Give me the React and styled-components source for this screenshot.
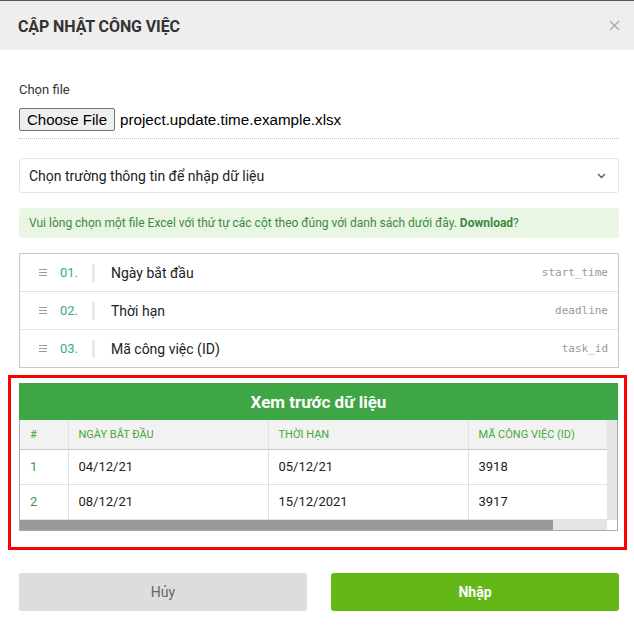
import React from "react";
import styled, { createGlobalStyle } from "styled-components";

const GlobalStyle = createGlobalStyle`
  html, body {
    margin: 0;
    padding: 0;
    background: #fff;
    font-family: Roboto, "Noto Sans", sans-serif;
    color: #333;
  }
  * { box-sizing: border-box; }
`;

const fields = [
  { no: "01.", label: "Ngày bắt đầu", key: "start_time" },
  { no: "02.", label: "Thời hạn", key: "deadline" },
  { no: "03.", label: "Mã công việc (ID)", key: "task_id" },
];

const columns = [
  { title: "#", w: 48 },
  { title: "Ngày bắt đầu", w: 200 },
  { title: "Thời hạn", w: 200 },
  { title: "Mã công việc (ID)", w: 200 },
];

const rows = [
  ["1", "04/12/21", "05/12/21", "3918"],
  ["2", "08/12/21", "15/12/2021", "3917"],
];

const VIEWPORT = 588;
const tableWidth = columns.reduce((s, c) => s + c.w, 0);

export default function App() {
  const thumb = Math.min(100, (VIEWPORT / tableWidth) * 100);

  return (
    <>
      <GlobalStyle />
      <ModalUI>
        <HeaderUI>
          <TitleUI>CẬP NHẬT CÔNG VIỆC</TitleUI>
          <CloseUI aria-label="close">
            <svg width="11" height="11" viewBox="0 0 11 11">
              <path d="M1 1 L10 10 M10 1 L1 10" stroke="#aaa" strokeWidth="1.4" />
            </svg>
          </CloseUI>
        </HeaderUI>

        <BodyUI>
          <LabelUI>Chọn file</LabelUI>
          <FileRowUI>
            <FileButtonUI>Choose File</FileButtonUI>
            <FileNameUI>project.update.time.example.xlsx</FileNameUI>
          </FileRowUI>

          <SelectUI>
            <span>Chọn trường thông tin để nhập dữ liệu</span>
            <svg width="9" height="6" viewBox="0 0 9 6">
              <path d="M1 1 L4.5 4.5 L8 1" fill="none" stroke="#555" strokeWidth="1.3" />
            </svg>
          </SelectUI>

          <AlertUI>
            Vui lòng chọn một file Excel với thứ tự các cột theo đúng với danh sách dưới đây.{" "}
            <b>Download</b>?
          </AlertUI>

          <ListUI>
            {fields.map((f) => (
              <FieldRowUI key={f.key}>
                <HandleUI>
                  <i />
                  <i />
                  <i />
                </HandleUI>
                <NumUI>{f.no}</NumUI>
                <SepUI />
                <FieldLabelUI>{f.label}</FieldLabelUI>
                <KeyUI>{f.key}</KeyUI>
              </FieldRowUI>
            ))}
          </ListUI>

          <PreviewUI>
            <TableBoxUI>
              <TableTitleUI>Xem trước dữ liệu</TableTitleUI>
              <ScrollAreaUI>
                <ViewportUI>
                  <TableUI style={{ width: tableWidth }}>
                    <thead>
                      <tr>
                        {columns.map((c) => (
                          <ThUI key={c.title} w={c.w}>
                            {c.title}
                          </ThUI>
                        ))}
                      </tr>
                    </thead>
                    <tbody>
                      {rows.map((r) => (
                        <tr key={r[0]}>
                          {r.map((c, i) => (
                            <TdUI key={i} first={i === 0}>
                              {c}
                            </TdUI>
                          ))}
                        </tr>
                      ))}
                    </tbody>
                  </TableUI>
                </ViewportUI>
                <VTrackUI />
              </ScrollAreaUI>
              <HBarUI>
                <HTrackUI>
                  <HThumbUI style={{ width: `${thumb}%` }} />
                </HTrackUI>
                <CornerUI />
              </HBarUI>
            </TableBoxUI>
          </PreviewUI>

          <FooterUI>
            <ButtonUI>Hủy</ButtonUI>
            <ButtonUI primary>Nhập</ButtonUI>
          </FooterUI>
        </BodyUI>
      </ModalUI>
    </>
  );
}

const ModalUI = styled.div`
  width: 634px;
  height: 641px;
  border-top: 1px solid #555;
  background: #fff;
`;

const HeaderUI = styled.div`
  height: 49px;
  background: #eeeeee;
  display: flex;
  align-items: center;
  justify-content: space-between;
  padding: 0 14px 0 18px;
`;

const TitleUI = styled.div`
  font-size: 16px;
  font-weight: 700;
  color: #333;
  letter-spacing: -0.1px;
  padding-top: 2px;
`;

const CloseUI = styled.div`
  display: flex;
  width: 11px;
  height: 11px;
`;

const BodyUI = styled.div`
  padding: 0 15px 0 19px;
`;

const LabelUI = styled.div`
  font-size: 13px;
  color: #333;
  margin-top: 32px;
  line-height: 16px;
`;

const FileRowUI = styled.div`
  display: flex;
  align-items: center;
  margin-top: 10px;
  padding-bottom: 7px;
  border-bottom: 1px dotted #c4c4c4;
`;

const FileButtonUI = styled.div`
  font-family: "Liberation Sans", Arial, sans-serif;
  font-size: 15px;
  color: #000;
  background: #efefef;
  border: 1px solid #767676;
  border-radius: 2px;
  height: 23px;
  line-height: 21px;
  padding: 0 7px;
`;

const FileNameUI = styled.div`
  font-family: "Liberation Sans", Arial, sans-serif;
  font-size: 15.2px;
  color: #000;
  margin-left: 5px;
`;

const SelectUI = styled.div`
  margin-top: 19px;
  height: 35px;
  border: 1px solid #e3e3e3;
  border-radius: 3px;
  display: flex;
  align-items: center;
  justify-content: space-between;
  padding: 0 12px 0 9px;
  font-size: 14px;
  color: #222;
`;

const AlertUI = styled.div`
  margin-top: 15px;
  height: 30px;
  background: #e9f6e4;
  border-radius: 3px;
  color: #3c8a3c;
  font-size: 12px;
  display: flex;
  align-items: center;
  padding: 0 10px;
  white-space: pre;

  b {
    font-weight: 700;
  }
`;

const ListUI = styled.div`
  margin-top: 15px;
  border: 1px solid #c8c8c8;
`;

const FieldRowUI = styled.div`
  height: 38px;
  display: flex;
  align-items: center;
  padding: 0 10px 0 19px;
  border-top: 1px solid #e2e2e2;

  &:first-child {
    border-top: 0;
    height: 37px;
  }
`;

const HandleUI = styled.div`
  width: 8px;
  display: flex;
  flex-direction: column;
  gap: 2px;

  i {
    display: block;
    height: 1px;
    background: #999;
  }
`;

const NumUI = styled.div`
  margin-left: 13px;
  font-size: 13px;
  color: #2fb27a;
  width: 18px;
`;

const SepUI = styled.div`
  width: 3px;
  height: 18px;
  background: #e8e8e8;
  margin-left: 14px;
`;

const FieldLabelUI = styled.div`
  margin-left: 16px;
  font-size: 14px;
  color: #222;
  flex: 1;
`;

const KeyUI = styled.div`
  font-family: "DejaVu Sans Mono", "Liberation Mono", monospace;
  font-size: 11px;
  color: #999;
`;

const PreviewUI = styled.div`
  margin: 7px 0 0 -11px;
  width: 619px;
  border: 3px solid #ff0000;
  padding: 5px 6px 16px 8px;
`;

const TableBoxUI = styled.div`
  border: 1px solid #aaa;
  border-top: 0;
`;

const TableTitleUI = styled.div`
  height: 37px;
  background: #3ea645;
  color: #fff;
  font-size: 17px;
  font-weight: 700;
  display: flex;
  align-items: center;
  justify-content: center;
  margin: 0 -1px;
`;

const ScrollAreaUI = styled.div`
  display: flex;
  height: 100px;
`;

const ViewportUI = styled.div`
  flex: 1;
  overflow: hidden;
`;

const VTrackUI = styled.div`
  width: 10px;
  background: #e5e5e5;
`;

const HBarUI = styled.div`
  display: flex;
  height: 10px;
`;

const HTrackUI = styled.div`
  flex: 1;
  background: #e5e5e5;
`;

const HThumbUI = styled.div`
  height: 100%;
  background: #999;
`;

const CornerUI = styled.div`
  width: 10px;
  background: #fff;
`;

const TableUI = styled.table`
  border-collapse: collapse;
  table-layout: fixed;
`;

const ThUI = styled.th`
  width: ${(p) => p.w}px;
  height: 29px;
  background: #f2f2f2;
  border-bottom: 1px solid #c8c8c8;
  border-left: 1px solid #e2e2e2;
  text-align: left;
  padding: 0 10px;
  font-size: 11px;
  font-weight: 400;
  text-transform: uppercase;
  color: #48a838;

  &:first-child {
    border-left: 0;
  }
`;

const TdUI = styled.td`
  height: 35px;
  border-bottom: 1px solid #e2e2e2;
  border-left: ${(p) => (p.first ? "0" : "1px solid #e2e2e2")};
  padding: 0 10px;
  font-size: 13px;
  color: ${(p) => (p.first ? "#3b9a4a" : "#222")};
`;

const FooterUI = styled.div`
  display: flex;
  gap: 24px;
  margin-top: 23px;
`;

const ButtonUI = styled.button`
  flex: 1;
  height: 38px;
  border: 0;
  border-radius: 3px;
  font-family: Roboto, "Noto Sans", sans-serif;
  font-size: 14px;
  font-weight: ${(p) => (p.primary ? 700 : 400)};
  background: ${(p) => (p.primary ? "#63b716" : "#dddddd")};
  color: ${(p) => (p.primary ? "#fff" : "#666")};
`;
